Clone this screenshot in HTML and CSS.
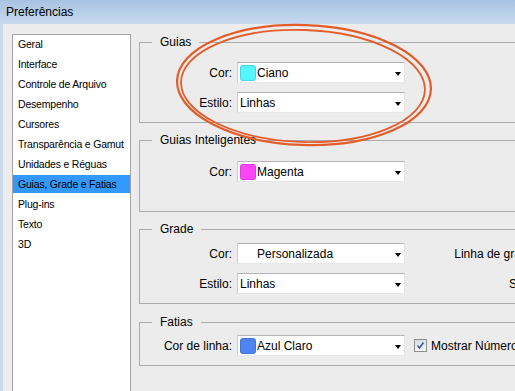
FILE: index.html
```html
<!DOCTYPE html>
<html lang="pt">
<head>
  <meta charset="UTF-8">
  <title>Preferências</title>
  <link rel="stylesheet" href="styles.css">
</head>
<body>
  <div class="window">
    <div class="titlebar">Preferências</div>

    <div class="content">
      <ul class="nav">
        <li>Geral</li>
        <li>Interface</li>
        <li>Controle de Arquivo</li>
        <li>Desempenho</li>
        <li>Cursores</li>
        <li>Transparência e Gamut</li>
        <li>Unidades e Réguas</li>
        <li class="active">Guias, Grade e Fatias</li>
        <li>Plug-ins</li>
        <li>Texto</li>
        <li>3D</li>
      </ul>

      <div class="panels">
        <div class="group guias">
          <span class="group-title">Guias</span>
          <label>Cor:</label>
          <div class="select"><span class="swatch cyan"></span>Ciano<span class="arrow"></span></div>
          <span></span>
          <label>Estilo:</label>
          <div class="select">Linhas<span class="arrow"></span></div>
        </div>

        <div class="group smart">
          <span class="group-title">Guias Inteligentes</span>
          <label>Cor:</label>
          <div class="select"><span class="swatch magenta"></span>Magenta<span class="arrow"></span></div>
        </div>

        <div class="group grade">
          <span class="group-title">Grade</span>
          <label>Cor:</label>
          <div class="select"><span class="swatch blank"></span>Personalizada<span class="arrow"></span></div>
          <label class="side">Linha de grade a cada:</label>
          <label>Estilo:</label>
          <div class="select">Linhas<span class="arrow"></span></div>
          <label class="side">Subdivisões:</label>
        </div>

        <div class="group fatias">
          <span class="group-title">Fatias</span>
          <label>Cor de linha:</label>
          <div class="select"><span class="swatch blue"></span>Azul Claro<span class="arrow"></span></div>
          <div class="check-row">
            <span class="box">
              <svg width="9" height="9" viewBox="0 0 9 9"><path d="M1.5 4.5 L3.5 7 L7.5 1.5" fill="none" stroke="#3d5a96" stroke-width="1.6"/></svg>
            </span>
            Mostrar Números de Fatias
          </div>
        </div>
      </div>
    </div>

    <svg class="annotation" width="515" height="391" viewBox="0 0 515 391">
      <g fill="none" stroke="#e35d2b" transform="rotate(2 304 85)">
        <ellipse cx="304" cy="85" rx="127" ry="60" stroke-width="2.2"/>
        <ellipse cx="303" cy="86" rx="122" ry="56" stroke-width="1.8"/>
      </g>
    </svg>
  </div>
</body>
</html>
```

FILE: styles.css
```css
html, body {
  margin: 0;
  padding: 0;
  overflow: hidden;
}

body {
  font-family: 'Liberation Sans', Arial, sans-serif;
  font-size: 12px;
  color: #000;
  background-color: #ececec;
}

.window {
  position: relative;
  width: 515px;
  height: 391px;
  overflow: hidden;
  background-color: #ececec;
}

.titlebar {
  height: 24px;
  line-height: 25px;
  padding-left: 6px;
  font-size: 12px;
  background: linear-gradient(#a8c3e2, #c7daef);
}

.content {
  display: flex;
  gap: 8px;
  height: 367px;
  padding: 10px 0 0 9px;
  box-sizing: border-box;
  border-left: 3px solid #cbdaeb;
}

.nav {
  flex: none;
  list-style: none;
  margin: 0;
  padding: 0;
  width: 119px;
  height: 400px;
  box-sizing: border-box;
  border: 1px solid #a3a3a3;
  background-color: #fff;
}

.nav li {
  height: 18px;
  line-height: 18px;
  margin-bottom: 2px;
  padding-left: 5px;
  font-size: 10.5px;
  letter-spacing: -0.2px;
  white-space: nowrap;
}

.nav li.active {
  background-color: #3399ff;
}

.panels {
  flex: none;
  width: 480px;
  padding-top: 8px;
  display: flex;
  flex-direction: column;
  gap: 17px;
}

.group {
  position: relative;
  display: grid;
  grid-template-columns: 92px 168px 167px;
  grid-auto-rows: 21px;
  column-gap: 5px;
  row-gap: 9px;
  align-items: center;
  border: 1px solid #ababab;
}

.group-title {
  position: absolute;
  top: -9px;
  left: 12px;
  padding: 0 8px;
  line-height: 16px;
  background-color: #ececec;
}

.guias {
  padding: 19px 0 9px;
}

.smart {
  padding: 20px 0 29px;
}

.grade {
  padding: 13px 0 9px;
}

.fatias {
  margin-top: 1px;
  padding: 12px 0 9px;
}

.group label {
  text-align: right;
  white-space: nowrap;
}

.select {
  display: flex;
  align-items: center;
  height: 21px;
  box-sizing: border-box;
  padding: 0 3px 0 2px;
  background-color: #fff;
  border: 1px solid;
  border-color: #b3b3b3 #e4e4e4 #e8e8e8 #cdcdcd;
  white-space: nowrap;
}

.arrow {
  margin-left: auto;
  margin-top: 2px;
  width: 0;
  height: 0;
  border-left: 3.5px solid transparent;
  border-right: 3.5px solid transparent;
  border-top: 4px solid #000;
}

.swatch {
  flex: none;
  width: 16px;
  height: 16px;
  box-sizing: border-box;
  margin-right: 1px;
  border-radius: 3px;
  border: 1px solid rgba(0, 0, 0, 0.12);
}

.swatch.cyan {
  background-color: #55f6ff;
}

.swatch.magenta {
  background-color: #fb45f5;
}

.swatch.blue {
  background-color: #4d86f2;
}

.swatch.blank {
  border: none;
}

.check-row {
  display: flex;
  align-items: center;
  gap: 4px;
  margin-left: 4px;
  white-space: nowrap;
}

.box {
  display: flex;
  align-items: center;
  justify-content: center;
  width: 13px;
  height: 13px;
  box-sizing: border-box;
  border: 1px solid #8e8f8f;
  background: linear-gradient(#d8dde6, #f4f6f9);
}

.annotation {
  position: absolute;
  left: 0;
  top: 0;
  pointer-events: none;
}
```
